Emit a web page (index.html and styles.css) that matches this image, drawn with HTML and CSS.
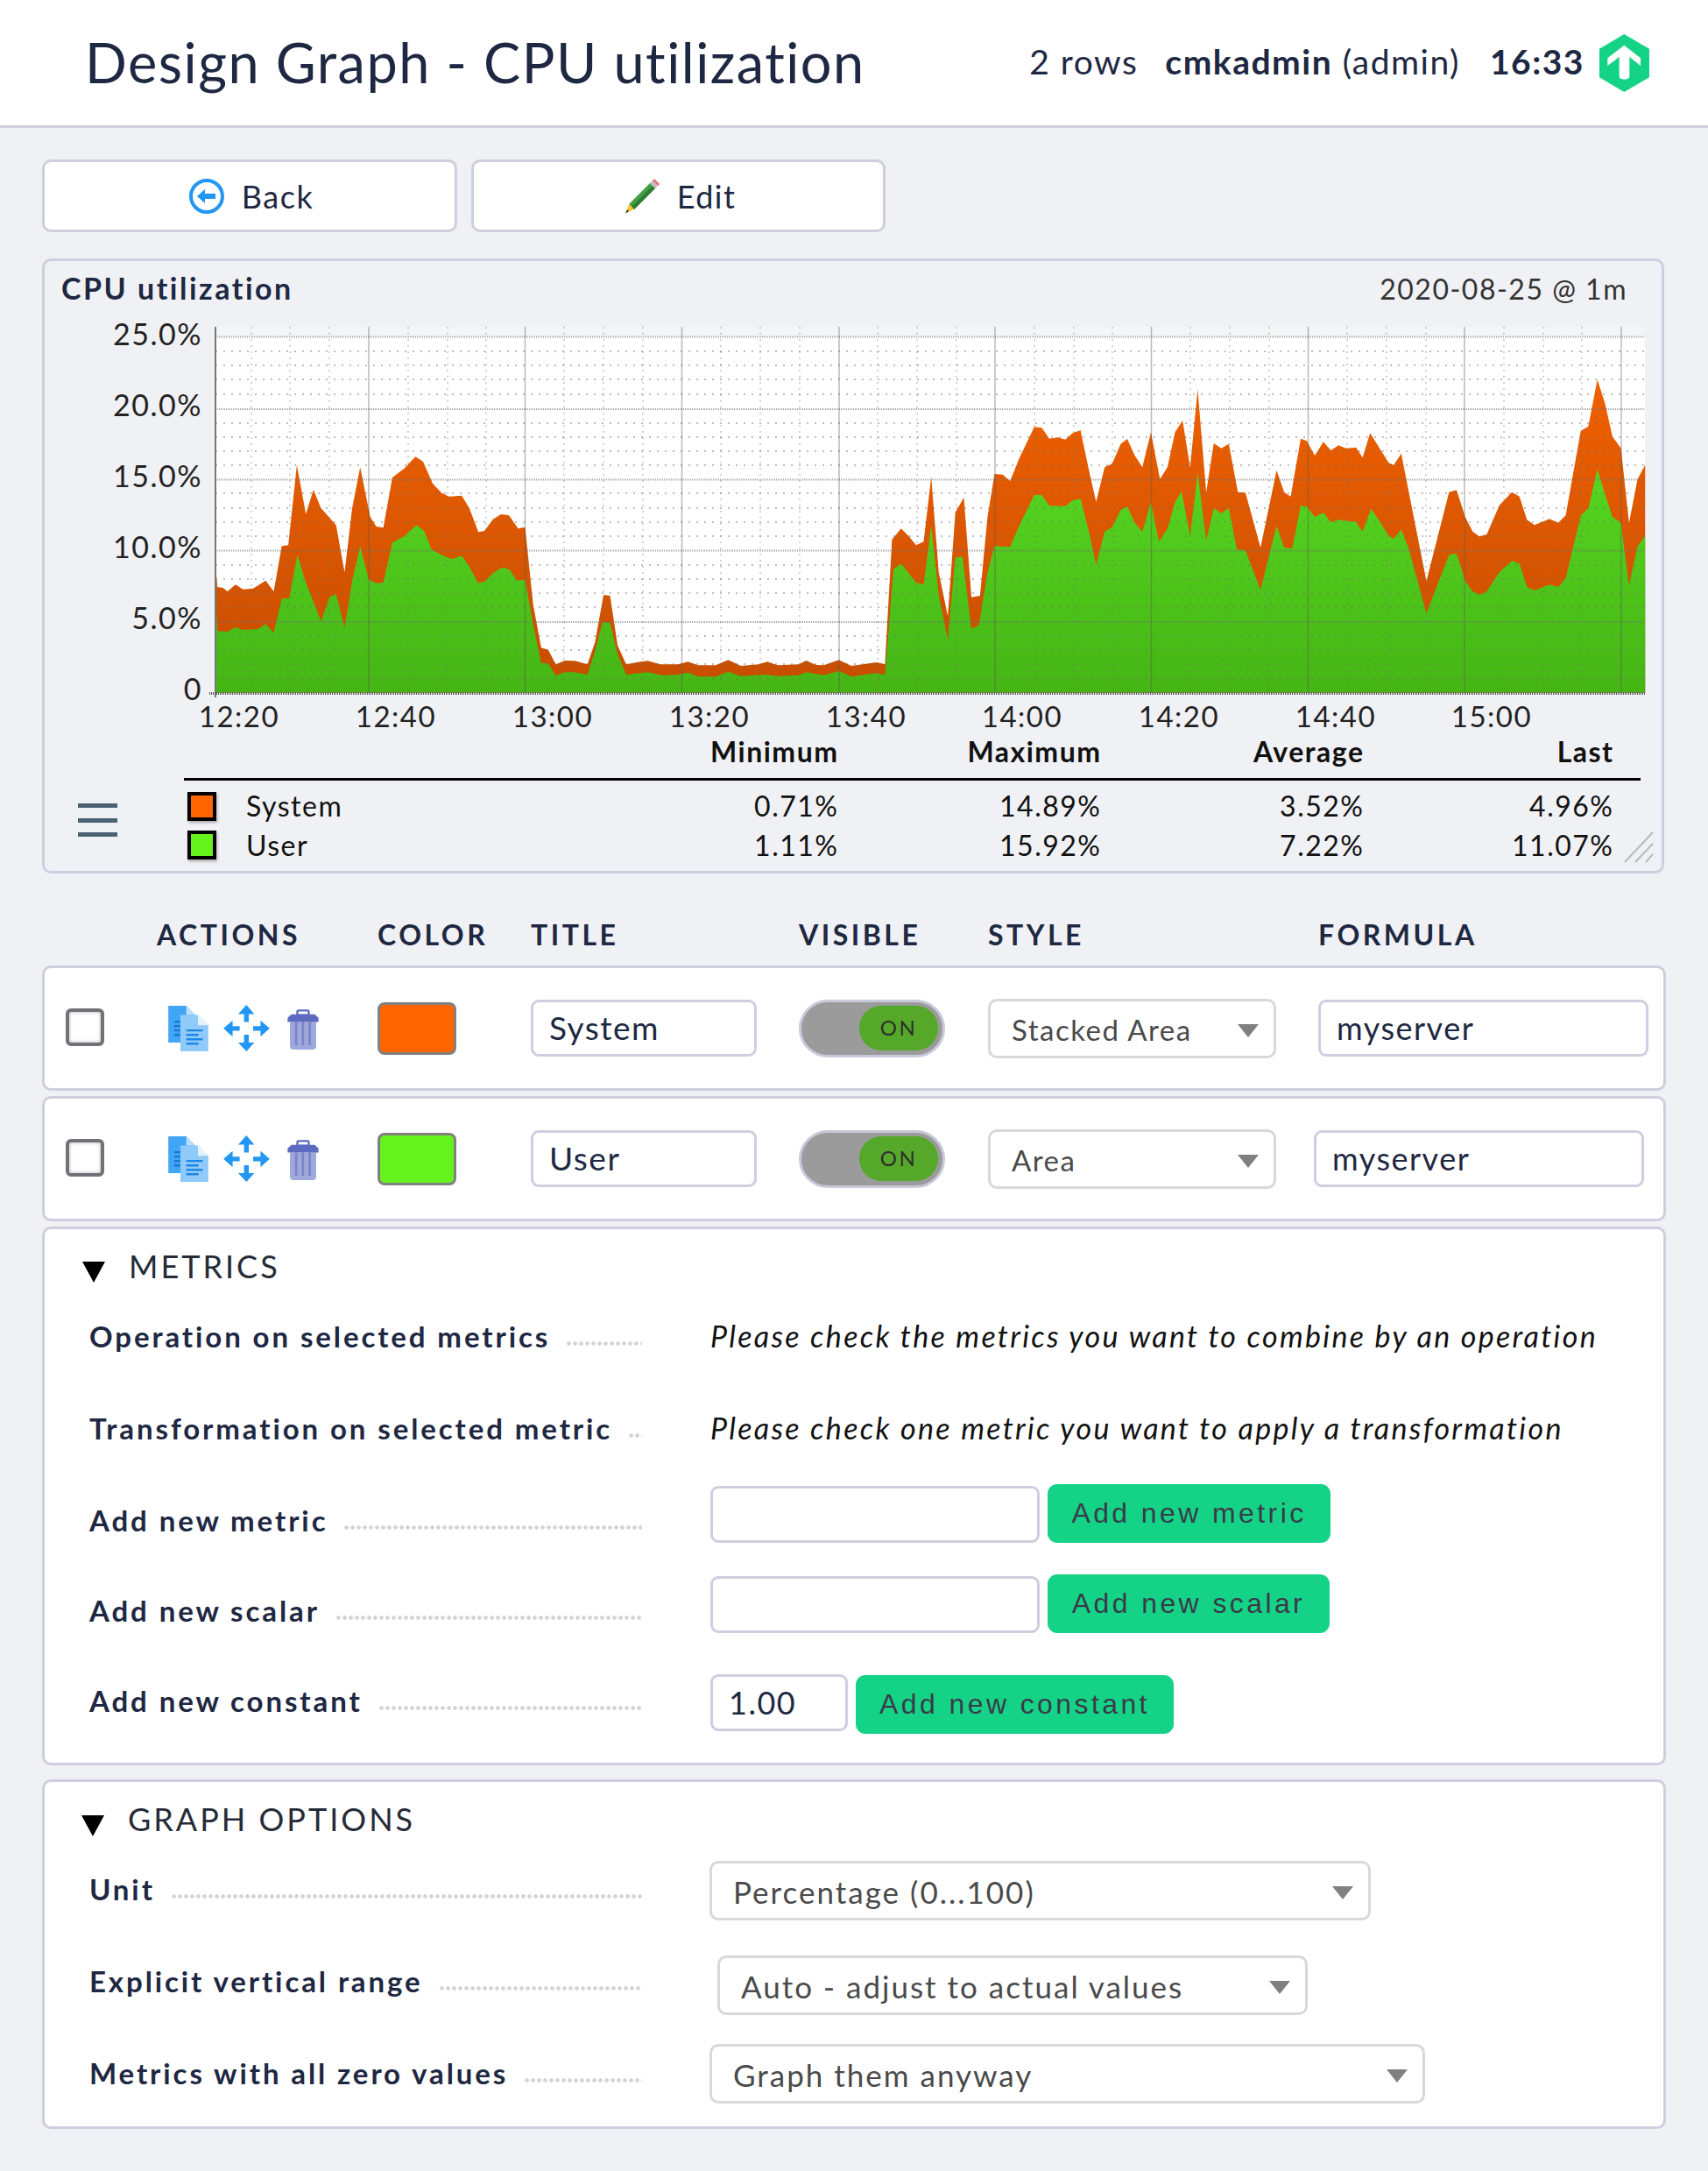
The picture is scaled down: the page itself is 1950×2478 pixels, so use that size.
FILE: index.html
```html
<!DOCTYPE html>
<html lang="en">
<head>
  <meta charset="UTF-8" />
  <title>Design Graph - CPU utilization</title>
  <link rel="stylesheet" href="styles.css">
</head>
<body>
  <header class="top">
    <h1>Design Graph - CPU utilization</h1>
    <div class="top-info">
      <span class="rows">2 rows</span>
      <span class="user"><b>cmkadmin</b> (admin)</span>
      <b class="clock">16:33</b>
      <svg class="logo" viewBox="137 60 171 198" width="57" height="66">
        <polygon fill="#15d386" points="222,60 308,110 308,208 222,258 137,208 137,110"/>
        <path fill="#fff" d="M222 98L278 142V168L240 138V205Q240 215 222 215Q205 215 205 205V138L165 168V142Z"/>
      </svg>
    </div>
  </header>

  <main class="page">
    <nav class="page-buttons">
      <a class="page-button page-button-back">
        <svg viewBox="0 0 40 40" width="40" height="40">
          <circle cx="20" cy="20" r="18" fill="none" stroke="#2196f3" stroke-width="4"/>
          <path fill="#2196f3" d="M9 20L18 12V17H30V23H18V28Z"/>
        </svg>
        Back
      </a>
      <a class="page-button">
        <svg viewBox="0 0 40 40" width="40" height="40">
          <polygon fill="#43a047" points="5,29 29,5 35,11 11,35"/>
          <polygon fill="#2e7d32" points="8,32 32,8 35,11 11,35"/>
          <polygon fill="#bdbdbd" points="29,5 32,2 38,8 35,11"/>
          <polygon fill="#e57373" points="32,2 34,0 40,6 38,8"/>
          <polygon fill="#fbc02d" points="5,29 11,35 2,39"/>
          <polygon fill="#333" points="3,35 5,37 1,40"/>
        </svg>
        Edit
      </a>
    </nav>

    <section class="graph">
      <div class="graph-title">
        <b>CPU utilization</b>
        <span>2020-08-25 @ 1m</span>
      </div>

      <svg class="plot" viewBox="51 360 1846 478" width="1846" height="478">
        <defs>
          <linearGradient id="orange" gradientUnits="userSpaceOnUse" x1="0" y1="190" x2="0" y2="1262">
            <stop offset="0" stop-color="#f06000"/>
            <stop offset="1" stop-color="#c64d00"/>
          </linearGradient>
          <linearGradient id="green" gradientUnits="userSpaceOnUse" x1="0" y1="500" x2="0" y2="1262">
            <stop offset="0" stop-color="#56d520"/>
            <stop offset="1" stop-color="#45b514"/>
          </linearGradient>
        </defs>

        <rect x="246" y="373" width="1632" height="418" fill="#fff"/>
        <rect x="246" y="373" width="1632" height="11" fill="#f4f5f7"/>

        <!-- left half traced in crop coordinates -->
        <g transform="translate(200 370) scale(.574 .3333)">
          <polygon fill="url(#orange)" points="80,1262 80,818 84,900 95,903 104,915 120,892 135,908 155,905 180,878 196,915 212,760 225,757 242,482 260,650 275,567 290,630 320,688 337,850 352,630 368,490 388,660 400,693 414,697 432,525 455,495 478,454 493,470 512,545 530,578 545,590 570,587 585,630 603,712 615,708 632,668 648,651 664,655 682,700 696,695 712,960 728,1108 742,1115 757,1165 775,1152 795,1153 820,1165 835,1090 852,927 865,930 880,1100 897,1165 920,1157 940,1153 965,1165 1000,1165 1020,1156 1040,1168 1075,1168 1100,1150 1125,1170 1160,1165 1178,1156 1198,1168 1240,1165 1255,1152 1275,1167 1290,1168 1320,1150 1345,1170 1395,1158 1412,1165 1412,1262"/>
          <polygon fill="url(#green)" points="80,1262 80,945 84,1050 104,1053 120,1038 135,1047 165,1044 180,1027 196,1057 212,940 227,938 243,790 260,885 275,950 290,1017 307,935 320,925 337,1040 352,880 368,760 385,875 400,887 414,885 432,748 455,727 480,688 495,708 510,772 530,790 550,805 570,793 585,830 603,887 617,880 632,853 650,833 665,840 680,878 696,875 712,1030 728,1160 742,1162 757,1203 775,1192 795,1192 820,1200 835,1120 850,1020 865,1023 880,1130 897,1200 940,1192 970,1203 1000,1200 1020,1193 1040,1207 1075,1207 1100,1190 1125,1205 1175,1200 1198,1205 1240,1202 1255,1192 1290,1202 1320,1188 1345,1207 1395,1195 1412,1198 1412,1262"/>
        </g>
        <!-- right half -->
        <g transform="translate(1000 370) scale(.574 .3333)">
          <polygon fill="url(#orange)" points="5,1262 5,1160 18,1165 32,738 50,700 65,725 80,757 95,745 110,522 125,850 143,1000 158,645 175,593 190,935 207,930 222,660 236,513 252,515 267,537 285,460 315,352 330,355 345,392 362,388 377,395 392,372 407,364 425,510 438,608 455,490 470,478 487,410 500,393 515,450 530,490 547,370 565,530 580,490 595,370 610,330 625,490 640,222 657,575 672,408 687,425 702,410 720,575 735,577 765,765 797,500 812,575 825,590 845,392 857,400 873,450 890,403 905,432 920,415 935,425 955,422 968,457 983,373 1000,420 1020,475 1030,482 1045,443 1060,575 1095,880 1140,575 1155,568 1172,660 1187,710 1200,727 1215,720 1240,620 1265,575 1280,590 1295,670 1310,688 1340,667 1357,680 1372,655 1402,365 1417,350 1435,190 1450,270 1465,385 1482,425 1498,680 1515,530 1530,482 1530,1262"/>
          <polygon fill="url(#green)" points="5,1262 5,1197 18,1200 35,840 50,820 80,885 95,892 110,690 125,930 143,1080 158,800 172,795 190,1043 205,1030 222,850 236,760 267,763 285,690 315,585 330,585 345,622 377,623 392,603 407,598 425,720 438,825 455,710 470,695 487,635 500,625 515,680 530,710 547,610 563,745 580,700 595,610 608,573 625,725 640,510 657,740 672,630 687,648 702,630 718,772 735,775 765,910 797,690 812,765 828,768 845,620 857,625 873,660 890,645 905,678 920,670 955,677 968,710 985,632 1000,670 1020,725 1030,735 1045,703 1060,770 1095,990 1140,790 1155,785 1172,880 1187,915 1200,927 1215,915 1240,850 1265,810 1280,820 1295,900 1310,912 1340,892 1357,900 1372,870 1402,655 1417,630 1435,497 1450,580 1465,660 1482,680 1498,895 1515,760 1530,725 1530,1262"/>
        </g>

        <path class="grid-dots-h" d="M246 401H1878M246 417H1878M246 433H1878M246 450H1878M246 483H1878M246 499H1878M246 515H1878M246 531H1878M246 563H1878M246 580H1878M246 596H1878M246 612H1878M246 645H1878M246 661H1878M246 677H1878M246 693H1878M246 726H1878M246 742H1878M246 758H1878M246 775H1878"/>
        <path class="grid-dots-v" d="M287 373V791M331 373V791M376 373V791M466 373V791M511 373V791M555 373V791M644 373V791M689 373V791M734 373V791M823 373V791M868 373V791M913 373V791M1002 373V791M1047 373V791M1092 373V791M1181 373V791M1226 373V791M1270 373V791M1359 373V791M1404 373V791M1449 373V791M1538 373V791M1583 373V791M1628 373V791M1717 373V791M1762 373V791M1806 373V791"/>
        <path class="grid-major-h" d="M246 384.5H1878M246 467H1878M246 547.5H1878M246 628.5H1878M246 710H1878"/>
        <path class="grid-major-v" d="M421 373V791M599.5 373V791M778.5 373V791M958 373V791M1136 373V791M1314.5 373V791M1493.5 373V791M1672 373V791M1851 373V791"/>
        <path class="axis" d="M246 373V796"/>
        <path class="axis-zero" d="M239 791.5H1878"/>

        <text class="y-label" x="231" y="394">25.0%</text>
        <text class="y-label" x="231" y="475">20.0%</text>
        <text class="y-label" x="231" y="556">15.0%</text>
        <text class="y-label" x="231" y="637">10.0%</text>
        <text class="y-label" x="231" y="718">5.0%</text>
        <text class="y-label" x="231" y="799">0</text>
        <text class="x-label" x="273" y="830">12:20</text>
        <text class="x-label" x="452" y="830">12:40</text>
        <text class="x-label" x="631" y="830">13:00</text>
        <text class="x-label" x="810" y="830">13:20</text>
        <text class="x-label" x="989" y="830">13:40</text>
        <text class="x-label" x="1167" y="830">14:00</text>
        <text class="x-label" x="1346" y="830">14:20</text>
        <text class="x-label" x="1525" y="830">14:40</text>
        <text class="x-label" x="1703" y="830">15:00</text>
      </svg>

      <div class="legend">
        <div class="burger"><i></i><i></i><i></i></div>
        <div class="legend-table">
          <div class="legend-head">
            <span></span><b>Minimum</b><b>Maximum</b><b>Average</b><b>Last</b>
          </div>
          <div class="legend-body">
            <div class="legend-row">
              <span class="legend-name"><i class="swatch swatch-system"></i>System</span>
              <span>0.71%</span><span>14.89%</span><span>3.52%</span><span>4.96%</span>
            </div>
            <div class="legend-row">
              <span class="legend-name"><i class="swatch swatch-user"></i>User</span>
              <span>1.11%</span><span>15.92%</span><span>7.22%</span><span>11.07%</span>
            </div>
          </div>
        </div>
      </div>
      <svg class="grip" viewBox="0 0 34 36" width="34" height="36">
        <path d="M1 35L33 1M13 35L33 14M25 35L33 26" stroke="#b9b9c2" stroke-width="2" fill="none"/>
      </svg>
    </section>

    <div class="metric-head">
      <span class="col-actions">ACTIONS</span>
      <span class="col-color">COLOR</span>
      <span class="col-title">TITLE</span>
      <span class="col-visible">VISIBLE</span>
      <span class="col-style">STYLE</span>
      <span>FORMULA</span>
    </div>

    <div class="metric-row">
      <input class="check" type="checkbox" />
      <div class="actions">
        <svg class="icon-clone" viewBox="487 172 136 155" width="46" height="52"><use href="#clone"/></svg>
        <svg class="icon-move" viewBox="675 172 157 158" width="53" height="53"><use href="#move"/></svg>
        <svg class="icon-trash" viewBox="895 183 105 137" width="36" height="46"><use href="#trash"/></svg>
      </div>
      <i class="color-box color-system"></i>
      <input class="field title-field" type="text" value="System" />
      <div class="toggle"><span>ON</span></div>
      <div class="select style-select">
        <select><option>Stacked Area</option></select>
      </div>
      <input class="field formula-field" type="text" value="myserver" />
    </div>

    <div class="metric-row">
      <input class="check" type="checkbox" />
      <div class="actions">
        <svg class="icon-clone" viewBox="487 172 136 155" width="46" height="52"><use href="#clone"/></svg>
        <svg class="icon-move" viewBox="675 172 157 158" width="53" height="53"><use href="#move"/></svg>
        <svg class="icon-trash" viewBox="895 183 105 137" width="36" height="46"><use href="#trash"/></svg>
      </div>
      <i class="color-box color-user"></i>
      <input class="field title-field" type="text" value="User" />
      <div class="toggle"><span>ON</span></div>
      <div class="select style-select">
        <select><option>Area</option></select>
      </div>
      <input class="field formula-field formula-shifted" type="text" value="myserver" />
    </div>

    <section class="panel panel-metrics">
      <h2><i class="fold"></i>METRICS</h2>
      <div class="form-row row-op">
        <div class="form-label">Operation on selected metrics</div>
        <em>Please check the metrics you want to combine by an operation</em>
      </div>
      <div class="form-row row-trans">
        <div class="form-label">Transformation on selected metric</div>
        <em>Please check one metric you want to apply a transformation</em>
      </div>
      <div class="form-row row-metric">
        <div class="form-label">Add new metric</div>
        <div class="form-inputs">
          <input class="field wide-field" type="text" />
          <button class="add add-metric">Add new metric</button>
        </div>
      </div>
      <div class="form-row row-scalar">
        <div class="form-label">Add new scalar</div>
        <div class="form-inputs">
          <input class="field wide-field" type="text" />
          <button class="add add-scalar">Add new scalar</button>
        </div>
      </div>
      <div class="form-row row-constant">
        <div class="form-label">Add new constant</div>
        <div class="form-inputs">
          <input class="field small-field" type="text" value="1.00" />
          <button class="add add-constant">Add new constant</button>
        </div>
      </div>
    </section>

    <section class="panel panel-options">
      <h2><i class="fold"></i>GRAPH OPTIONS</h2>
      <div class="form-row row-unit">
        <div class="form-label">Unit</div>
        <div class="select unit-select"><select><option>Percentage (0...100)</option></select></div>
      </div>
      <div class="form-row row-range">
        <div class="form-label">Explicit vertical range</div>
        <div class="select range-select"><select><option>Auto - adjust to actual values</option></select></div>
      </div>
      <div class="form-row row-zero">
        <div class="form-label">Metrics with all zero values</div>
        <div class="select zero-select"><select><option>Graph them anyway</option></select></div>
      </div>
    </section>
  </main>

  <svg class="icon-defs" width="0" height="0">
    <defs>
      <g id="clone">
        <polygon fill="#42a5f5" points="487,172 548,172 590,215 590,297 487,297"/>
        <polygon fill="#bbdefb" points="548,172 578,203 548,203"/>
        <path stroke="#1976d2" stroke-width="7" d="M507 226H530M507 241H530M507 256H530M507 271H530"/>
        <polygon fill="#90caf9" points="528,203 588,203 623,238 623,327 528,327"/>
        <polygon fill="#e3f2fd" points="588,203 623,238 588,238"/>
        <path stroke="#1e88e5" stroke-width="7" d="M548 256H604M548 271H590M548 286H604M548 301H590"/>
      </g>
      <g id="move" fill="#2196f3">
        <path d="M753 172L780 203H761V230H745V203H725Z"/>
        <path d="M753 330L780 300H761V273H745V300H725Z"/>
        <path d="M675 252L706 225V244H730V260H706V280Z"/>
        <path d="M832 252L801 225V244H776V260H801V280Z"/>
      </g>
      <g id="trash">
        <path fill="#9fa8da" d="M903 226H992V308Q992 320 980 320H915Q903 320 903 308Z"/>
        <path stroke="#7986cb" stroke-width="8" d="M924 226V305M947 226V305M970 226V305"/>
        <rect fill="none" stroke="#5c6bc0" stroke-width="7" x="928" y="187" width="39" height="16" rx="5"/>
        <path fill="#5c6bc0" d="M908 200H987L1000 212V226H895V212Z"/>
      </g>
    </defs>
  </svg>
</body>
</html>
```

FILE: styles.css
```css
* {
  box-sizing: border-box;
}
body {
  margin: 0;
  background-color: #f0f1f4;
  color: #1e2842;
  font-family: Lato, "Open Sans", sans-serif;
  font-size: 32px;
  letter-spacing: 1.5px;
}
input, select, button {
  font-family: inherit;
  font-size: inherit;
  letter-spacing: inherit;
  color: inherit;
}

/* header */
.top {
  display: flex;
  justify-content: space-between;
  align-items: center;
  height: 146px;
  padding: 0 67px 3px 97px;
  background-color: #fff;
  border-bottom: 3px solid #cdcfdf;
}
h1 {
  margin: 0;
  font-size: 63px;
  font-weight: 400;
  letter-spacing: 1.5px;
}
.top-info {
  display: flex;
  align-items: center;
  font-size: 39px;
}
.rows {
  margin-right: 31px;
}
.user {
  margin-right: 34px;
}
.clock {
  margin-right: 17px;
}
.logo {
  display: block;
  margin-top: 3px;
}

.page {
  padding: 36px 48px 49px;
}
.page-buttons {
  display: flex;
  gap: 16px;
}
.page-button {
  display: flex;
  align-items: center;
  justify-content: center;
  gap: 20px;
  width: 473px;
  height: 83px;
  padding-left: 4px;
  background-color: #fff;
  border: 3px solid #cdcfdf;
  border-radius: 10px;
  font-size: 36px;
}
.page-button-back {
  width: 474px;
}

/* graph */
.graph {
  position: relative;
  margin: 30px 2px 0 0;
  border: 3px solid #cdcfdf;
  border-radius: 10px;
}
.graph-title {
  display: flex;
  justify-content: space-between;
  height: 62px;
  padding: 12px 39px 0 19px;
  line-height: 40px;
}
.graph-title b {
  margin-top: -1px;
  font-size: 34px;
  letter-spacing: 2.5px;
}
.graph-title span {
  color: #333;
}
.plot {
  display: block;
}
.grid-dots-h {
  stroke: rgba(110, 110, 110, .45);
  stroke-width: 2;
  stroke-dasharray: 2 7;
  fill: none;
}
.grid-dots-v {
  stroke: rgba(110, 110, 110, .4);
  stroke-width: 1.5;
  stroke-dasharray: 2 5;
  fill: none;
}
.grid-major-h {
  stroke: rgba(110, 110, 110, .6);
  stroke-width: 2;
  stroke-dasharray: 1 1;
  fill: none;
}
.grid-major-v {
  stroke: rgba(90, 90, 90, .42);
  stroke-width: 1.5;
  fill: none;
}
.axis {
  stroke: #777;
  stroke-width: 2;
  fill: none;
}
.axis-zero {
  stroke: #555;
  stroke-width: 3;
  stroke-dasharray: 1 1;
  fill: none;
}
.y-label, .x-label {
  fill: #222;
  font-size: 33px;
}
.y-label {
  font-size: 34px;
  text-anchor: end;
}
.x-label {
  text-anchor: middle;
}

.legend {
  display: flex;
}
.burger {
  width: 159px;
  padding: 79px 0 0 38px;
}
.burger i {
  display: block;
  width: 45px;
  height: 5px;
  margin-bottom: 11.5px;
  background-color: #4a6272;
}
.legend-table {
  width: 1663px;
  color: #111;
}
.legend-head, .legend-row {
  display: grid;
  grid-template-columns: 447.5px 300px 300px 300px 285px;
  text-align: right;
}
.legend-head {
  height: 53px;
  line-height: 40px;
  border-bottom: 3px solid #000;
}
.legend-body {
  padding: 7px 0 7px;
}
.legend-row {
  height: 44.5px;
  line-height: 44px;
}
.legend-name {
  display: flex;
  align-items: center;
  text-align: left;
}
.swatch {
  width: 33px;
  height: 33px;
  margin: 0 34px 0 4px;
  border: 4px solid #000;
  box-shadow: 1px 2px 3px rgba(0, 0, 0, .3);
}
.swatch-system {
  background-color: #ff6600;
}
.swatch-user {
  background-color: #66f21d;
}
.grip {
  position: absolute;
  right: 9px;
  bottom: 9px;
}

/* metric table */
.metric-head {
  display: grid;
  grid-template-columns: 252px 175px 306px 216px 377px 1fr;
  margin: 50px 0 15px;
  padding-left: 131px;
  line-height: 40px;
  font-weight: 700;
  letter-spacing: 3.5px;
}
.metric-row {
  display: grid;
  grid-template-columns: 129px 252px 174px 306px 216px 378px 1fr;
  align-items: center;
  height: 143px;
  margin-bottom: 6px;
  background-color: #fff;
  border: 3px solid #cdcfdf;
  border-radius: 10px;
}
.check {
  appearance: none;
  width: 44px;
  height: 43px;
  margin: -3px 0 0 24px;
  background-color: #fff;
  border: 4px solid #6f7276;
  border-radius: 6px;
  box-shadow: inset 0 0 4px rgba(0, 0, 0, .3);
}
.actions {
  display: flex;
  align-items: center;
  padding-left: 12px;
}
.actions svg {
  display: block;
}
.icon-clone {
  margin-right: 17px;
}
.icon-move {
  margin-right: 20px;
}
.icon-trash {
  margin-top: 2px;
}
.color-box {
  display: block;
  width: 90px;
  height: 60px;
  margin-left: -1px;
  border: 3px solid #808080;
  border-radius: 8px;
}
.color-system {
  background-color: #ff6600;
}
.color-user {
  background-color: #66f21d;
}
.field {
  height: 65px;
  padding: 0 18px 2px;
  background-color: #fff;
  border: 3px solid #cdcfdf;
  border-radius: 9px;
  outline: none;
  font-size: 36px;
}
.title-field {
  width: 258px;
  font-size: 37px;
}
.formula-field {
  width: 377px;
  margin-left: -1px;
}
.formula-shifted {
  margin-left: -6px;
}
.toggle {
  display: flex;
  justify-content: flex-end;
  align-items: center;
  width: 167px;
  height: 66px;
  padding-right: 5px;
  background-color: #9b9b9b;
  border: 3px solid #c8c9da;
  border-radius: 33px;
}
.toggle span {
  width: 90px;
  height: 51px;
  background-color: #55a82a;
  border-radius: 25px;
  color: #2e2e2e;
  font-size: 24px;
  letter-spacing: 2.5px;
  line-height: 49px;
  text-align: center;
}
.select {
  position: relative;
  height: 68px;
}
.select select {
  appearance: none;
  display: block;
  width: 100%;
  height: 100%;
  padding: 2px 50px 0 24px;
  background-color: #fff;
  border: 3px solid #d8d8d8;
  border-radius: 10px;
  color: #4a4a4a;
  font-size: 35px;
  letter-spacing: 2px;
  outline: none;
}
.select::after {
  content: "";
  position: absolute;
  right: 20px;
  top: 29px;
  border-style: solid;
  border-width: 15px 12px 0;
  border-color: #808080 transparent transparent;
  pointer-events: none;
}
.style-select {
  width: 329px;
}
.style-select select {
  font-size: 33px;
  letter-spacing: 1.5px;
}

/* panels */
.panel {
  margin-bottom: 16px;
  background-color: #fff;
  border: 3px solid #cdcfdf;
  border-radius: 10px;
}
h2 {
  display: flex;
  margin: 0;
  padding-left: 43px;
  line-height: 40px;
  font-size: 36px;
  font-weight: 400;
  letter-spacing: 3px;
  color: #262b38;
}
.fold {
  width: 0;
  height: 0;
  margin: 15px 27px 0 0;
  border-style: solid;
  border-width: 24px 13px 0;
  border-color: #000 transparent transparent;
}
.panel-metrics {
  padding: 22px 0 33px;
}
.panel-options {
  padding: 22px 0 26px;
}
.panel-options h2 {
  padding-left: 42px;
}
.panel-options .fold {
  margin-top: 16px;
}
.form-row {
  display: grid;
  grid-template-columns: 708px 1fr;
  align-items: start;
  padding-left: 51px;
}
.form-row > em {
  margin-left: 1px;
  line-height: 40px;
  font-size: 34px;
  letter-spacing: 2.3px;
  color: #111;
  white-space: nowrap;
}
.form-label {
  display: flex;
  width: 631px;
  line-height: 40px;
  font-size: 33px;
  font-weight: 700;
  letter-spacing: 2.9px;
  white-space: nowrap;
}
.form-label::after {
  content: "";
  flex: 1;
  height: 5px;
  margin: 26px 0 0 18px;
  background-image: radial-gradient(circle, #d4d4d4 2px, transparent 2.5px);
  background-size: 7px 5px;
}
.form-inputs {
  display: flex;
  align-items: flex-start;
  margin-left: 1px;
}
.wide-field {
  width: 376px;
  margin: 2px 9px 0 0;
}
.small-field {
  width: 157px;
  margin: -1px 9px 0 0;
}
.add {
  height: 67px;
  padding: 0;
  background-color: #15d386;
  border: 0;
  border-radius: 11px;
  color: #3a3a4a;
  font-family: "Liberation Sans", Arial, sans-serif;
  font-size: 32px;
  letter-spacing: 3.4px;
}
.add-metric {
  width: 323px;
}
.add-scalar {
  width: 322px;
}
.add-constant {
  width: 363px;
}
.row-op {
  margin-top: 40px;
}
.row-trans {
  margin-top: 65px;
}
.row-metric {
  margin-top: 44px;
  height: 67px;
}
.row-metric .form-label, .row-scalar .form-label {
  margin-top: 21px;
}
.row-scalar {
  margin-top: 36px;
  height: 67px;
}
.row-constant {
  margin-top: 48px;
  height: 67px;
}
.row-constant .form-label {
  margin-top: 9px;
}
.row-unit {
  margin-top: 28px;
}
.row-unit .form-label {
  margin-top: 12px;
}
.row-range {
  margin-top: 40px;
}
.row-range .form-label {
  margin-top: 9px;
}
.row-zero {
  margin-top: 33px;
}
.row-zero .form-label {
  margin-top: 13px;
}
.unit-select {
  width: 755px;
}
.range-select {
  width: 674px;
  margin-left: 9px;
}
.zero-select {
  width: 817px;
}
.icon-defs {
  position: absolute;
}
```
